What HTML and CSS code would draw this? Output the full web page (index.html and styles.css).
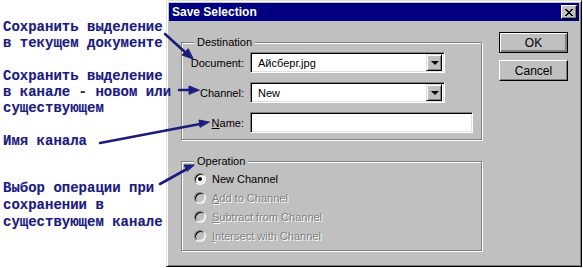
FILE: index.html
```html
<!DOCTYPE html>
<html lang="ru">

<head>
    <meta charset="UTF-8">
    <title>Save Selection</title>
    <link rel="stylesheet" href="styles.css">
</head>

<body>
    <div class="notes">
        <p class="note note-doc">Сохранить выделение<br>в текущем документе</p>
        <p class="note note-channel">Сохранить выделение<br>в канале - новом или<br>существующем</p>
        <p class="note note-name">Имя канала</p>
        <p class="note note-op">Выбор операции при<br>сохранении в<br>существующем канале</p>
    </div>

    <div class="dialog">
        <div class="titlebar">
            <span class="title">Save Selection</span>
            <span class="close">
                <svg width="8" height="7" viewBox="0 0 8 7">
                    <path d="M0 0h2v1h1v1h2v-1h1v-1h2v1h-1v1h-1v1h-1v1h1v1h1v1h1v1h-2v-1h-1v-1h-2v1h-1v1h-2v-1h1v-1h1v-1h1v-1h-1v-1h-1v-1h-1z" fill="#000"/>
                </svg>
            </span>
        </div>

        <div class="main">
            <div class="groups">
                <div class="group group-dest">
                    <span class="legend">Destination</span>
                    <div class="row">
                        <span class="label">Document:</span>
                        <div class="combo">
                            <span class="value">Айсберг.jpg</span>
                            <span class="drop"><i></i></span>
                        </div>
                    </div>
                    <div class="row">
                        <span class="label">Channel:</span>
                        <div class="combo">
                            <span class="value">New</span>
                            <span class="drop"><i></i></span>
                        </div>
                    </div>
                    <div class="row">
                        <span class="label"><u>N</u>ame:</span>
                        <div class="field"></div>
                    </div>
                </div>

                <div class="group group-op">
                    <span class="legend">Operation</span>
                    <div class="radio checked"><span class="dot"></span>New Channel</div>
                    <div class="radio disabled"><span class="dot"></span><span><u>A</u>dd to Channel</span></div>
                    <div class="radio disabled"><span class="dot"></span><span><u>S</u>ubtract from Channel</span></div>
                    <div class="radio disabled"><span class="dot"></span><span><u>I</u>ntersect with Channel</span></div>
                </div>
            </div>

            <div class="buttons">
                <div class="btn default"><span>OK</span></div>
                <div class="btn"><span>Cancel</span></div>
            </div>
        </div>
    </div>

    <svg class="arrows" width="583" height="268" viewBox="0 0 583 268">
        <g stroke="#1c1c7c" stroke-width="2.6" stroke-linecap="round" fill="#1c1c7c">
            <line x1="165" y1="34" x2="186" y2="53"/>
            <polygon points="193,59 182,55 188,49" stroke-width="1"/>
            <line x1="179" y1="90" x2="191" y2="90"/>
            <polygon points="199,90 189,86 189,94" stroke-width="1"/>
            <line x1="100" y1="143" x2="200" y2="124"/>
            <polygon points="209,122 199,120 200,127" stroke-width="1"/>
            <line x1="160" y1="184" x2="187" y2="169"/>
            <polygon points="194,165 184,165 187,171" stroke-width="1"/>
        </g>
    </svg>
</body>

</html>
```

FILE: styles.css
```css
* {
    margin: 0;
    padding: 0;
    box-sizing: border-box;
}

body {
    width: 583px;
    height: 268px;
    background: #fff;
    display: flex;
    align-items: flex-start;
    position: relative;
    overflow: hidden;
    font-family: "Liberation Sans", Arial, sans-serif;
    font-size: 11px;
}

/* подписи слева */
.notes {
    width: 166px;
    flex-shrink: 0;
    padding-left: 3px;
    display: flex;
    flex-direction: column;
    position: relative;
    z-index: 1;
}

.note {
    font-family: "Liberation Mono", "Courier New", monospace;
    font-weight: bold;
    font-size: 14px;
    line-height: 16px;
    color: #1c1c7c;
    white-space: nowrap;
    text-shadow: 0 0 1px #c8c8f0;
}

.note-doc {
    margin-top: 19px;
}

.note-channel {
    margin-top: 17px;
}

.note-name {
    margin-top: 17px;
}

.note-op {
    margin-top: 31px;
    line-height: 17px;
}

/* окно */
.dialog {
    width: 416px;
    height: 267px;
    flex-shrink: 0;
    background: #c0c0c0;
    border: 1px solid;
    border-color: #dfdfdf #000 #000 #dfdfdf;
    box-shadow: inset 1px 1px 0 #fff, inset -1px -1px 0 #808080;
    padding: 2px;
}

.titlebar {
    height: 18px;
    background: #000080;
    display: flex;
    align-items: center;
    justify-content: space-between;
    padding: 0 2px 0 3px;
}

.title {
    color: #fff;
    font-weight: bold;
    font-size: 12px;
}

.close {
    width: 16px;
    height: 14px;
    background: #c0c0c0;
    border: 1px solid;
    border-color: #fff #000 #000 #fff;
    box-shadow: inset -1px -1px 0 #808080;
    display: flex;
    align-items: center;
    justify-content: center;
}

.main {
    display: flex;
    align-items: flex-start;
    gap: 17px;
    padding: 11px 0 0 12px;
}

.groups {
    width: 301px;
    margin-top: 10px;
}

.group {
    position: relative;
    border: 1px solid #808080;
    box-shadow: inset 1px 1px 0 #fff, 1px 1px 0 #fff;
}

.legend {
    position: absolute;
    left: 12px;
    top: -8px;
    line-height: 14px;
    padding: 0 3px;
    background: #c0c0c0;
    color: #000;
}

.group-dest {
    height: 98px;
    padding-top: 9px;
    display: flex;
    flex-direction: column;
    gap: 9px;
}

.row {
    display: flex;
    align-items: center;
    gap: 6px;
    height: 21px;
    flex-shrink: 0;
}

.label {
    width: 62px;
    text-align: right;
}

.combo,
.field {
    height: 21px;
    background: #fff;
    border: 1px solid;
    border-color: #808080 #fff #fff #808080;
    box-shadow: inset 1px 1px 0 #000, inset -1px -1px 0 #dfdfdf;
    display: flex;
    align-items: center;
    padding: 2px;
}

.combo {
    width: 195px;
}

.field {
    width: 223px;
}

.value {
    flex: 1;
    padding-left: 5px;
}

.drop {
    width: 16px;
    height: 17px;
    background: #c0c0c0;
    border: 1px solid;
    border-color: #dfdfdf #000 #000 #dfdfdf;
    box-shadow: inset 1px 1px 0 #fff, inset -1px -1px 0 #808080;
    display: flex;
    align-items: center;
    justify-content: center;
}

.drop i {
    width: 0;
    height: 0;
    border-left: 4px solid transparent;
    border-right: 4px solid transparent;
    border-top: 4px solid #000;
    margin-left: 1px;
}

.group-op {
    height: 90px;
    margin-top: 21px;
    padding: 7px 0 0 12px;
}

.radio {
    height: 19px;
    display: flex;
    align-items: center;
    gap: 6px;
}

.radio .dot {
    width: 12px;
    height: 12px;
    border-radius: 50%;
    border: 1px solid;
    border-color: #808080 #fff #fff #808080;
    box-shadow: inset 1px 1px 0 #000, inset -1px -1px 0 #dfdfdf;
    background: #fff;
    display: flex;
    align-items: center;
    justify-content: center;
}

.radio.checked .dot::after {
    content: "";
    width: 4px;
    height: 4px;
    border-radius: 50%;
    background: #000;
}

.radio.disabled {
    color: #808080;
    text-shadow: 1px 1px 0 #fff;
}

.radio.disabled .dot {
    background: #c0c0c0;
}

/* кнопки */
.buttons {
    display: flex;
    flex-direction: column;
    gap: 7px;
}

.btn {
    width: 69px;
    height: 21px;
    background: #c0c0c0;
    border: 1px solid;
    border-color: #fff #000 #000 #fff;
    box-shadow: inset -1px -1px 0 #808080;
    display: flex;
    align-items: center;
    justify-content: center;
    font-size: 12px;
}

.btn.default {
    border: 1px solid #000;
    box-shadow: inset 1px 1px 0 #fff, inset -2px -2px 0 #808080, inset -1px -1px 0 #000;
}

.arrows {
    position: absolute;
    left: 0;
    top: 0;
    pointer-events: none;
    z-index: 2;
}
```
